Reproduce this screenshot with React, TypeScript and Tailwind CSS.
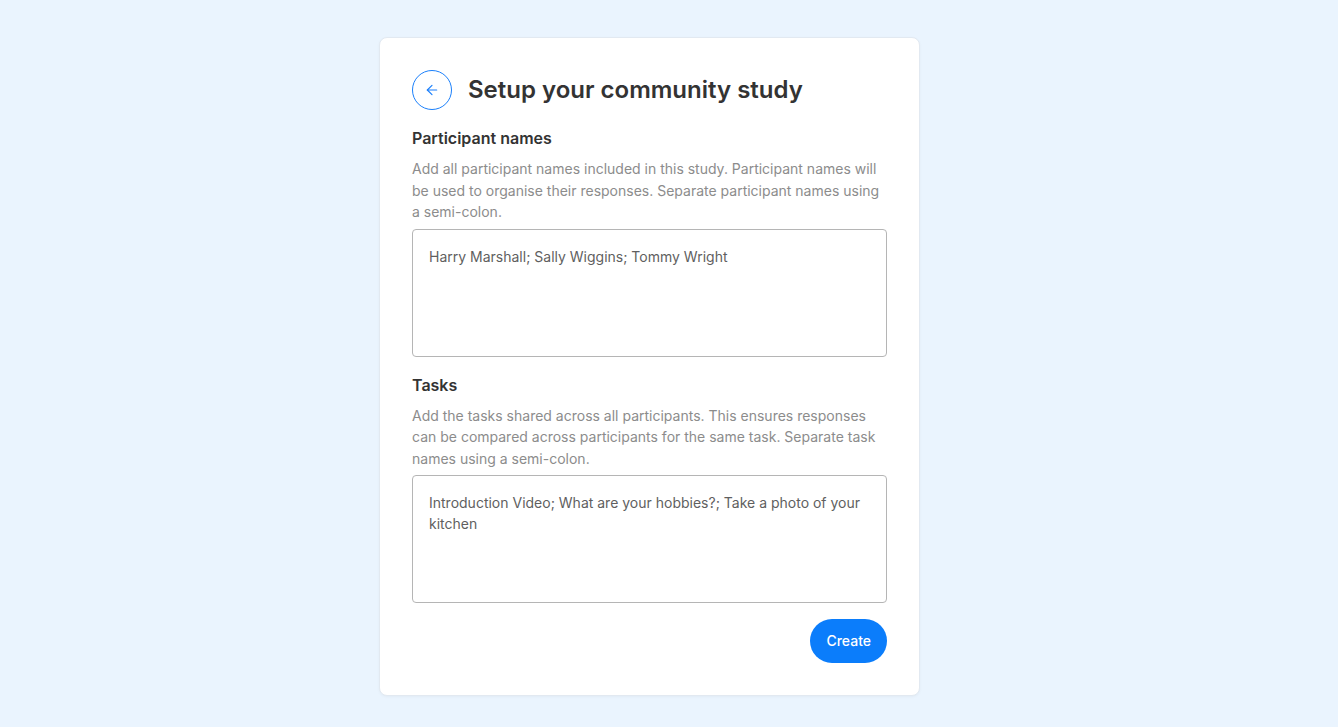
import { ArrowLeft } from 'lucide-react';

const Field = ({ label, help, value }: { label: string; help: string; value: string }) => (
  <div className="flex flex-col">
    <label className="text-base leading-6 font-semibold text-[#333333]">{label}</label>
    <p className="mt-2 text-sm leading-[21.5px] text-[#8c8c8c]">{help}</p>
    <textarea
      defaultValue={value}
      className="mt-1.5 h-32 w-full resize-none rounded border border-[#b5b5b5] px-4 py-4 text-sm leading-[21px] text-[#5f5f5f] outline-none"
    />
  </div>
);

const App = () => {
  return (
    <div className="min-h-screen bg-[#eaf4fe] pt-[37px] font-['Inter','Noto_Sans',sans-serif]">
      <div className="ml-[379px] flex w-[541px] flex-col rounded-lg border border-[#e2e9f1] bg-white p-8 shadow-[0_1px_3px_rgba(0,0,0,0.04)]">
        <div className="flex items-center gap-4">
          <button className="flex h-10 w-10 items-center justify-center rounded-full border border-[#1a7ffb] text-[#1a7ffb]">
            <ArrowLeft className="h-4 w-4" strokeWidth={1.75} />
          </button>
          <h1 className="text-2xl font-semibold text-[#333333]">Setup your community study</h1>
        </div>

        <div className="mt-4">
          <Field
            label="Participant names"
            help="Add all participant names included in this study. Participant names will be used to organise their responses. Separate participant names using a semi-colon."
            value="Harry Marshall; Sally Wiggins; Tommy Wright"
          />
        </div>

        <div className="mt-4">
          <Field
            label="Tasks"
            help="Add the tasks shared across all participants. This ensures responses can be compared across participants for the same task. Separate task names using a semi-colon."
            value="Introduction Video; What are your hobbies?; Take a photo of your kitchen"
          />
        </div>

        <div className="mt-4 flex justify-end">
          <button className="h-11 rounded-full bg-[#0b7dfb] px-4 text-sm font-medium text-white">Create</button>
        </div>
      </div>
    </div>
  );
};

export default App;
